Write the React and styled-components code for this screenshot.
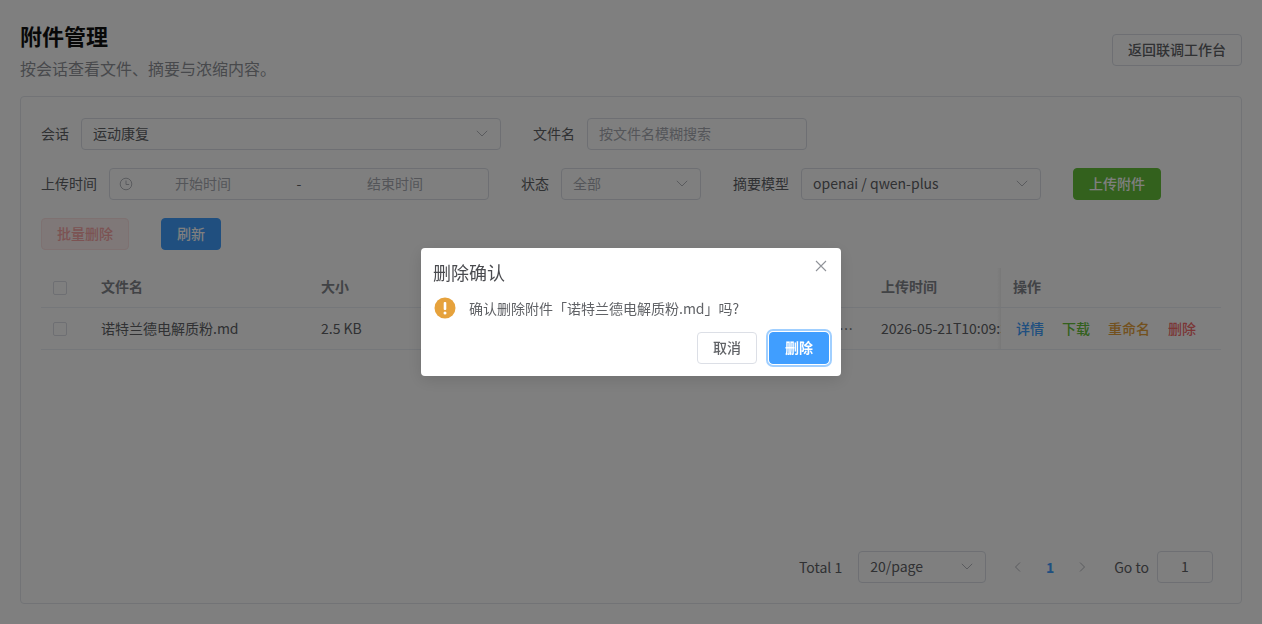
import React from 'react';
import styled, { createGlobalStyle } from 'styled-components';

const GlobalStyle = createGlobalStyle`
  html, body { margin: 0; padding: 0; background: #fff; }
  body {
    font-family: "Noto Sans CJK SC", "Noto Sans", sans-serif;
    font-size: 14px;
    color: #303133;
    overflow: hidden;
  }
  * { box-sizing: border-box; }
`;

const Page = styled.div`
  height: 624px;
  padding: 20px 20px 20px;
  display: flex;
  flex-direction: column;
`;

const Header = styled.header`
  display: flex;
  justify-content: space-between;
  align-items: flex-start;
  height: 76px;
`;

const Title = styled.h1`
  margin: 0;
  font-size: 22px;
  line-height: 30px;
  font-weight: 700;
  color: #111;
`;

const Subtitle = styled.p`
  margin: 5px 0 0;
  font-size: 16px;
  line-height: 26px;
  color: #909399;
`;

const Button = styled.button`
  height: 32px;
  width: ${(p) => p.$width}px;
  padding: 0 0 2px;
  border-radius: 4px;
  font: inherit;
  font-weight: 500;
  border: 1px solid ${(p) => p.$border || '#dcdfe6'};
  background: ${(p) => p.$bg || '#fff'};
  color: ${(p) => p.$color || '#606266'};
`;

const BackButton = styled(Button)`
  margin-top: 14px;
`;

const Card = styled.section`
  flex: 1;
  border: 1px solid #e4e7ed;
  border-radius: 4px;
  padding: 21px 20px 20px;
  display: flex;
  flex-direction: column;
`;

const FormRow = styled.div`
  display: flex;
  align-items: center;
  gap: 32px;
  height: 32px;
  margin-bottom: 18px;
`;

const Field = styled.label`
  display: flex;
  align-items: center;
  gap: 12px;
`;

const Label = styled.span`
  color: #606266;
  line-height: 30px;
  padding-bottom: 2px;
  white-space: nowrap;
`;

const Control = styled.div`
  width: ${(p) => p.$width}px;
  height: 32px;
  padding: 0 11px 2px;
  border: 1px solid #dcdfe6;
  border-radius: 4px;
  display: flex;
  align-items: center;
  justify-content: ${(p) => (p.$center ? 'center' : 'space-between')};
  color: ${(p) => (p.$muted ? '#a8abb2' : '#606266')};
  line-height: 28px;
  white-space: nowrap;
`;

const RangeText = styled.span`
  flex: 1;
  text-align: center;
  color: #a8abb2;
`;

const RangeDash = styled.span`
  width: 28px;
  text-align: center;
  color: #606266;
`;

const Icon = styled.svg`
  width: 14px;
  height: 14px;
  flex: none;
  fill: none;
  stroke: #b4b7bd;
  stroke-width: 1;
`;

const ClockIcon = styled(Icon)`
  margin: 2px -12px 0 -2px;
`;

const Toolbar = styled.div`
  display: flex;
  gap: 32px;
  height: 32px;
  margin-bottom: 18px;
`;

const TableWrap = styled.div`
  width: 1180px;
`;

const Row = styled.div`
  display: grid;
  grid-template-columns: 48px 220px 100px 460px 132px 220px;
  height: ${(p) => p.$height}px;
  border-bottom: 1px solid #ebeef5;
  align-items: center;
  color: ${(p) => (p.$head ? '#83868c' : '#606266')};
  font-weight: ${(p) => (p.$head ? 700 : 400)};
`;

const Cell = styled.div`
  padding: 0 ${(p) => p.$paddingRight || 12}px ${(p) => (p.$head ? 4 : 2)}px 12px;
  text-align: ${(p) => (p.$right ? 'right' : 'left')};
  white-space: nowrap;
  overflow: hidden;
`;

const CheckCell = styled.div`
  padding: 0 12px;
`;

const FixedCell = styled.div`
  position: relative;
  align-self: stretch;
  display: flex;
  align-items: center;
  padding: 0 12px ${(p) => (p.$head ? 4 : 2)}px ${(p) => p.$left || 12}px;
  gap: ${(p) => p.$gap || 0}px;
  background: #fff;
  &::before {
    content: '';
    position: absolute;
    left: -4px;
    top: 0;
    bottom: 0;
    width: 4px;
    background: linear-gradient(to left, rgba(0, 0, 0, 0.06), rgba(0, 0, 0, 0));
  }
`;

const Checkbox = styled.span`
  display: block;
  width: 14px;
  height: 14px;
  border: 1px solid #dcdfe6;
  border-radius: 2px;
`;

const LinkButton = styled.span`
  color: ${(p) => p.$color};
  font-weight: 500;
  padding: 0 4px;
  white-space: nowrap;
`;

const Pagination = styled.div`
  margin-top: auto;
  display: flex;
  align-items: center;
  justify-content: flex-end;
  padding-right: 8px;
  height: 32px;
  color: #606266;
`;

const Total = styled.span`
  margin-right: 16px;
`;

const Pager = styled.div`
  margin: 0 16px;
  display: grid;
  grid-template-columns: repeat(3, 32px);
  align-items: center;
  justify-items: center;
`;

const PageNumber = styled.span`
  color: #409eff;
  font-weight: 700;
`;

const GoTo = styled.span`
  margin-right: 8px;
`;

const Overlay = styled.div`
  position: fixed;
  inset: 0;
  background: rgba(0, 0, 0, 0.5);
`;

const Dialog = styled.div`
  position: absolute;
  left: 421px;
  top: 248px;
  width: 420px;
  height: 128px;
  padding: 12px;
  background: #fff;
  border-radius: 4px;
  box-shadow: 0 4px 16px rgba(0, 0, 0, 0.12);
`;

const DialogTitle = styled.div`
  font-size: 18px;
  line-height: 24px;
  color: #4a4b4f;
`;

const CloseButton = styled.svg`
  position: absolute;
  right: 13px;
  top: 11px;
  width: 14px;
  height: 14px;
  stroke: #909399;
  stroke-width: 1.1;
  fill: none;
`;

const DialogBody = styled.div`
  display: flex;
  align-items: center;
  gap: 12px;
  height: 34px;
  margin-top: 7px;
  color: #606266;
`;

const WarnIcon = styled.svg`
  width: 24px;
  height: 24px;
  flex: none;
`;

const DialogFooter = styled.div`
  display: flex;
  justify-content: flex-end;
  gap: 12px;
  margin-top: 7px;
`;

const FocusedButton = styled(Button)`
  outline: 2px solid #a0cfff;
  outline-offset: 1px;
  font-weight: 700;
`;

const Chevron = () => (
  <Icon viewBox="0 0 14 14">
    <path d="M1.8 4.8 7 10l5.2-5.2" />
  </Icon>
);

const Clock = () => (
  <ClockIcon viewBox="0 0 14 14">
    <circle cx="7" cy="7" r="5.8" />
    <path d="M7 3.5V7.5H10.2" />
  </ClockIcon>
);

const Pointer = ({ left }) => (
  <Icon viewBox="0 0 14 14">
    <path d={left ? 'M9 2.5 4.5 7 9 11.5' : 'M5 2.5 9.5 7 5 11.5'} />
  </Icon>
);

export default function App() {
  return (
    <>
      <GlobalStyle />
      <Page>
        <Header>
          <div>
            <Title>附件管理</Title>
            <Subtitle>按会话查看文件、摘要与浓缩内容。</Subtitle>
          </div>
          <BackButton $width={130}>返回联调工作台</BackButton>
        </Header>
        <Card>
          <FormRow>
            <Field>
              <Label>会话</Label>
              <Control $width={420}>
                运动康复
                <Chevron />
              </Control>
            </Field>
            <Field>
              <Label>文件名</Label>
              <Control $width={220} $muted>按文件名模糊搜索</Control>
            </Field>
          </FormRow>
          <FormRow>
            <Field>
              <Label>上传时间</Label>
              <Control $width={380}>
                <Clock />
                <RangeText>开始时间</RangeText>
                <RangeDash>-</RangeDash>
                <RangeText>结束时间</RangeText>
              </Control>
            </Field>
            <Field>
              <Label>状态</Label>
              <Control $width={140} $muted>
                全部
                <Chevron />
              </Control>
            </Field>
            <Field>
              <Label>摘要模型</Label>
              <Control $width={240}>
                openai / qwen-plus
                <Chevron />
              </Control>
            </Field>
            <Button $width={88} $bg="#67c23a" $border="#67c23a" $color="#fff">上传附件</Button>
          </FormRow>
          <Toolbar>
            <Button $width={88} $bg="#fef0f0" $border="#fde2e2" $color="#f9a7a7">批量删除</Button>
            <Button $width={60} $bg="#409eff" $border="#409eff" $color="#fff">刷新</Button>
          </Toolbar>
          <TableWrap>
            <Row $head $height={40}>
              <CheckCell><Checkbox /></CheckCell>
              <Cell $head>文件名</Cell>
              <Cell $head>大小</Cell>
              <Cell $head />
              <Cell $head>上传时间</Cell>
              <FixedCell $head>操作</FixedCell>
            </Row>
            <Row $height={42}>
              <CheckCell><Checkbox /></CheckCell>
              <Cell>诺特兰德电解质粉.md</Cell>
              <Cell>2.5 KB</Cell>
              <Cell $right $paddingRight={16}>…</Cell>
              <Cell>2026-05-21T10:09:32</Cell>
              <FixedCell $gap={10} $left={11}>
                <LinkButton $color="#409eff">详情</LinkButton>
                <LinkButton $color="#67c23a">下载</LinkButton>
                <LinkButton $color="#e6a23c">重命名</LinkButton>
                <LinkButton $color="#f56c6c">删除</LinkButton>
              </FixedCell>
            </Row>
          </TableWrap>
          <Pagination>
            <Total>Total 1</Total>
            <Control $width={128}>
              20/page
              <Chevron />
            </Control>
            <Pager>
              <Pointer left />
              <PageNumber>1</PageNumber>
              <Pointer />
            </Pager>
            <GoTo>Go to</GoTo>
            <Control $width={56} $center>1</Control>
          </Pagination>
        </Card>
      </Page>
      <Overlay>
        <Dialog>
          <DialogTitle>删除确认</DialogTitle>
          <CloseButton viewBox="0 0 14 14"><path d="M2 2 12 12M12 2 2 12" /></CloseButton>
          <DialogBody>
            <WarnIcon viewBox="0 0 24 24">
              <circle cx="12" cy="12" r="10.5" fill="#e6a23c" />
              <rect x="10.7" y="6" width="2.6" height="8" rx="1" fill="#fff" />
              <circle cx="12" cy="17" r="1.5" fill="#fff" />
            </WarnIcon>
            确认删除附件「诺特兰德电解质粉.md」吗?
          </DialogBody>
          <DialogFooter>
            <Button $width={60}>取消</Button>
            <FocusedButton $width={60} $bg="#409eff" $border="#409eff" $color="#fff">删除</FocusedButton>
          </DialogFooter>
        </Dialog>
      </Overlay>
    </>
  );
}
